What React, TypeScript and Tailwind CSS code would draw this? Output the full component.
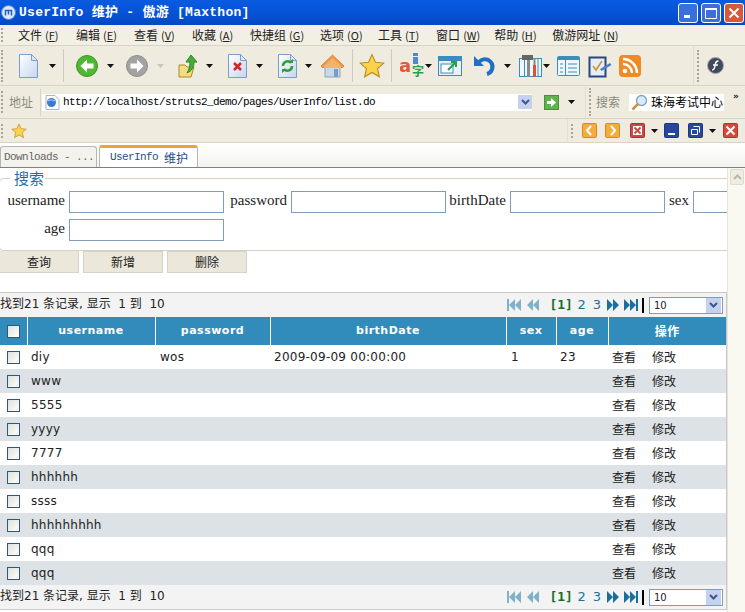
import type { ReactNode } from 'react';

const cjk = "font-['Noto_Sans_CJK_SC',sans-serif]";

function Caret({ className = '', pale = false }: { className?: string; pale?: boolean }) {
  return (
    <svg width="7" height="4" viewBox="0 0 7 4" className={`shrink-0 ${className}`}>
      <path d="M0 0h7L3.5 4z" fill={pale ? '#c8c6bc' : '#111'} />
    </svg>
  );
}

function Grip({ className = '' }: { className?: string }) {
  return <div className={`w-0 border-l-2 border-dotted border-[#a9a597] shrink-0 ${className}`} />;
}

function Divider({ className = '' }: { className?: string }) {
  return <div className={`w-px h-[33px] bg-[#cfcbbb] shrink-0 ${className}`} />;
}

function Icon({ w, h, className = '', children }: { w: number; h: number; className?: string; children: ReactNode }) {
  return (
    <svg width={w} height={h} viewBox={`0 0 ${w} ${h}`} className={`shrink-0 ${className}`}>
      {children}
    </svg>
  );
}

function Doc({ className = '', children }: { className?: string; children?: ReactNode }) {
  return (
    <Icon w={19} h={24} className={className}>
      <defs>
        <linearGradient id="docfill" x1="0" y1="0" x2="1" y2="1">
          <stop offset="0" stopColor="#ffffff" />
          <stop offset="1" stopColor="#c5d6ef" />
        </linearGradient>
      </defs>
      <path d="M.5.5h12l6 6v17H.5z" fill="url(#docfill)" stroke="#7d9ccb" />
      <path d="M12.5.5v6h6z" fill="#dfe8f6" stroke="#7d9ccb" />
      {children}
    </Icon>
  );
}

function RoundArrow({ color, dark, right = false, className = '' }: { color: string; dark: string; right?: boolean; className?: string }) {
  return (
    <Icon w={22} h={22} className={className}>
      <circle cx="11" cy="11" r="10.5" fill={color} stroke={dark} />
      <path
        d={right ? 'M11 4.5 17.5 11 11 17.5v-4H4.5v-5H11z' : 'M11 4.5 4.5 11l6.5 6.5v-4h6.5v-5H11z'}
        fill="#fff"
      />
    </Icon>
  );
}

function Star({ size, className = '' }: { size: number; className?: string }) {
  return (
    <svg width={size} height={size} viewBox="0 0 24 24" className={`shrink-0 ${className}`}>
      <path d="M12 1.5l3.2 7 7.6.8-5.7 5.1 1.7 7.6-6.8-4-6.8 4 1.7-7.6L1.2 9.3l7.6-.8z" fill="#fbd24a" stroke="#b98a1e" />
    </svg>
  );
}

function SmallBtn({ bg, border, className = '', children }: { bg: string; border: string; className?: string; children: ReactNode }) {
  return (
    <Icon w={15} h={15} className={className}>
      <rect x=".5" y=".5" width="14" height="14" rx="1" fill={bg} stroke={border} />
      {children}
    </Icon>
  );
}

function WinBtn({ red = false, children }: { red?: boolean; children: ReactNode }) {
  return (
    <div className={`w-[20px] h-[20px] rounded-[3px] border border-white flex items-center justify-center ${red ? 'bg-[#d8583a]' : 'bg-[#3b6fdc]'}`}>
      <svg width="14" height="14" viewBox="0 0 14 14">{children}</svg>
    </div>
  );
}

function PagerIcon({ kind, pale = false }: { kind: 'first' | 'prev' | 'next' | 'last'; pale?: boolean }) {
  const fill = pale ? '#7fb2c8' : '#1b6f9c';
  const paths = {
    first: 'M0 1h2v12H0zM8 1v12L2 7zM14 1v12L8 7z',
    prev: 'M7 1v12L1 7zM13 1v12L7 7z',
    next: 'M0 1v12l6-6zM6 1v12l6-6z',
    last: 'M0 1v12l6-6zM6 1v12l6-6zM12 1h2v12h-2z',
  };
  return (
    <svg width="14" height="14" viewBox="0 0 14 14" className="shrink-0">
      <path d={paths[kind]} fill={fill} />
    </svg>
  );
}

function Pager() {
  return (
    <div className="h-[24px] w-[727px] bg-[#f3f3f3] flex items-center border-[#c8c8c8] border-r">
      <span className="font-['DejaVu_Sans','Noto_Sans_CJK_SC',sans-serif] text-[12px] leading-[20px] mb-[2px] text-[#222] whitespace-pre">找到21 条记录, 显示  1 到  10</span>
      <div className="ml-auto flex items-center">
        <PagerIcon kind="first" pale />
        <div className="ml-[5px]"><PagerIcon kind="prev" pale /></div>
        <span className="ml-[9px] font-['DejaVu_Sans_Mono',monospace] font-bold text-[13px] text-[#14702a] w-[23px]">[1]</span>
        <span className="ml-[5px] font-['DejaVu_Sans',sans-serif] text-[13px] text-[#1b6f9c]">2</span>
        <span className="ml-[7px] font-['DejaVu_Sans',sans-serif] text-[13px] text-[#1b6f9c]">3</span>
        <div className="ml-[6px]"><PagerIcon kind="next" /></div>
        <div className="ml-[3px]"><PagerIcon kind="last" /></div>
        <div className="ml-[4px] w-[2px] h-[15px] bg-black" />
        <div className="ml-[5px] mr-[3px] w-[74px] h-[17px] bg-white border border-[#7f9db9] flex items-center">
          <span className="ml-[4px] font-['DejaVu_Sans',sans-serif] text-[10px] text-[#222]">10</span>
          <div className="ml-auto mr-px w-[15px] h-[15px] bg-[#c5d2ef] flex items-center justify-center">
            <svg width="9" height="6" viewBox="0 0 9 6"><path d="M1 1l3.5 3.5L8 1" fill="none" stroke="#3d5590" strokeWidth="2" /></svg>
          </div>
        </div>
      </div>
    </div>
  );
}

const menus: [string, string][] = [
  ['文件', 'F'], ['编辑', 'E'], ['查看', 'V'], ['收藏', 'A'], ['快捷组', 'G'], ['选项', 'O'], ['工具', 'T'], ['窗口', 'W'], ['帮助', 'H'], ['傲游网址', 'N'],
];

const rows: { name: string; password?: string; birth?: string; sex?: string; age?: string }[] = [
  { name: 'diy', password: 'wos', birth: '2009-09-09 00:00:00', sex: '1', age: '23' },
  { name: 'www' },
  { name: '5555' },
  { name: 'yyyy' },
  { name: '7777' },
  { name: 'hhhhhh' },
  { name: 'ssss' },
  { name: 'hhhhhhhhh' },
  { name: 'qqq' },
  { name: 'qqq' },
];

const headers: [string, string][] = [
  ['username', 'w-[128px]'],
  ['password', 'w-[115px]'],
  ['birthDate', 'w-[236px]'],
  ['sex', 'w-[50px]'],
  ['age', 'w-[52px]'],
];

const fields = ['username', 'password', 'birthDate', 'sex'];

export default function App() {
  return (
    <div className="w-[745px] h-[612px] overflow-hidden bg-white flex flex-col">
      {/* title bar */}
      <div className="h-[25px] shrink-0 bg-gradient-to-b from-[#0a5be0] via-[#0553d6] to-[#0448c4] flex items-center">
        <svg width="15" height="15" viewBox="0 0 15 15" className="ml-[1px]">
          <circle cx="7.5" cy="7.5" r="7" fill="#dce8f8" stroke="#4a83d8" />
          <path d="M4.5 10.5V5.5h6v5M7.5 5.5v4" fill="none" stroke="#1c5fc0" strokeWidth="1.5" />
        </svg>
        <span className="ml-[3px] font-['Liberation_Mono','Noto_Sans_CJK_SC',monospace] font-bold text-[13px] text-white whitespace-pre tracking-[0.27px]">UserInfo 维护 - 傲游 [Maxthon]</span>
        <div className="ml-auto mr-px flex gap-[3px]">
          <WinBtn><rect x="3" y="9" width="6" height="3" fill="#fff" /></WinBtn>
          <WinBtn><path d="M1.5 2.5h11v10h-11z" fill="none" stroke="#fff" /><rect x="1" y="2" width="12" height="2" fill="#fff" /></WinBtn>
          <WinBtn red><path d="M2.5 2.5l9 9M11.5 2.5l-9 9" stroke="#fff" strokeWidth="2" /></WinBtn>
        </div>
      </div>

      {/* menu */}
      <div className={`h-[21px] shrink-0 bg-[#f2f0e4] border-b border-[#d8d5c8] flex items-center gap-[18px] ${cjk} text-[12px] text-[#222]`}>
        <Grip className="ml-[1px] mr-[-3px] h-[14px]" />
        {menus.map(([label, key]) => (
          <span key={key} className="whitespace-pre flex items-center">
            {label}
            <span className="text-[11px] ml-[3px] w-[13px] text-center">(<span className="underline">{key}</span>)</span>
          </span>
        ))}
      </div>

      {/* toolbar */}
      <div className="h-[40px] shrink-0 bg-[#efecdf] border-b border-[#d8d5c8] flex items-center">
        <Grip className="ml-[1px] h-[32px]" />
        <Doc className="ml-[16px]" />
        <Caret className="ml-[11px]" />
        <Divider className="ml-[7px]" />
        <RoundArrow color="#4fb832" dark="#3b9426" className="ml-[12px]" />
        <Caret className="ml-[9px]" />
        <RoundArrow color="#a3a3a3" dark="#8c8c8c" right className="ml-[12px]" />
        <Caret pale className="ml-[9px]" />
        <Icon w={20} h={24} className="ml-[14px]">
          <path d="M1 11h6l2 2h7l-3 10H1z" fill="#f5dc7e" stroke="#a88a2c" />
          <path d="M13 1l6 7h-3c0 5-2 9-7 11 2-3 3-7 3-11h-4z" fill="#46ad38" stroke="#2f8a25" />
        </Icon>
        <Caret className="ml-[8px]" />
        <Doc className="ml-[15px]">
          <path d="M6 9l7 7M13 9l-7 7" stroke="#d6232a" strokeWidth="2.5" />
        </Doc>
        <Caret className="ml-[9px]" />
        <Doc className="ml-[15px]">
          <path d="M5 12a4.5 4.5 0 0 1 8-3" fill="none" stroke="#2d9d35" strokeWidth="2.5" />
          <path d="M14 12a4.5 4.5 0 0 1-8 3" fill="none" stroke="#2d9d35" strokeWidth="2.5" />
          <path d="M10 9h5V5zM9 15H4v4z" fill="#2d9d35" />
        </Doc>
        <Caret className="ml-[8px]" />
        <Icon w={23} h={24} className="ml-[9px]">
          <path d="M4 11v12h15V11z" fill="#c9d8e8" stroke="#8fa3bb" />
          <path d="M11.5 1L0 12l2 2 9.5-9 9.5 9 2-2z" fill="#f09a48" stroke="#c9732a" strokeWidth=".7" />
          <path d="M11.5 4L3 12v2h17v-2z" fill="#f4b26c" />
          <rect x="13" y="15" width="4" height="8" fill="#7b9cc4" />
        </Icon>
        <Divider className="ml-[8px]" />
        <Star size={26} className="ml-[6px]" />
        <Divider className="ml-[6px]" />
        <Icon w={25} h={26} className="ml-[8px]">
          <text x="-1" y="19" fontFamily="'DejaVu Sans', sans-serif" fontWeight="bold" fontSize="18" fill="#dd5a3a">a</text>
          <rect x="13" y="0" width="5" height="3" fill="#4f86d6" />
          <rect x="13" y="4" width="5" height="7" fill="#4f86d6" />
          <text x="12" y="23" fontFamily="'Noto Sans CJK SC', sans-serif" fontWeight="bold" fontSize="12" fill="#28a04a">字</text>
        </Icon>
        <Caret />
        <Icon w={24} h={20} className="ml-[6px]">
          <rect x=".5" y=".5" width="23" height="19" fill="#e8f1f8" stroke="#3c8dbe" />
          <rect x="1" y="1" width="22" height="4" fill="#3c8dbe" />
          <rect x="3" y="8" width="12" height="9" fill="#fff" stroke="#3c8dbe" />
          <path d="M10 14l7-7M13 6h5v5" fill="none" stroke="#24a148" strokeWidth="2" />
        </Icon>
        <Icon w={22} h={21} className="ml-[12px]">
          <path d="M4 9a7.5 7.5 0 1 1 9 10" fill="none" stroke="#1f6fc4" strokeWidth="4" />
          <path d="M0 1v10h10z" fill="#1f6fc4" />
        </Icon>
        <Caret className="ml-[8px]" />
        <Icon w={23} h={22} className="ml-[8px]">
          <rect x=".5" y="3.5" width="22" height="18" fill="#f2f7fb" stroke="#3c8dbe" />
          <path d="M5.5 4v17M19 4v17" stroke="#3c8dbe" />
          <rect x="8" y="1" width="3" height="21" fill="#8a8a8a" />
          <rect x="14" y="10" width="3" height="12" fill="#d8552e" />
          <rect x="14.5" y="3" width="2" height="7" fill="#888" />
          <rect x="3" y="0" width="11" height="5" fill="#666" />
        </Icon>
        <Caret className="ml-[1px]" />
        <Icon w={23} h={20} className="ml-[7px]">
          <rect x=".5" y=".5" width="22" height="19" rx="1" fill="#f0f6fb" stroke="#3c8dbe" />
          <rect x="1" y="1" width="21" height="3" fill="#3c8dbe" />
          <path d="M8.5 4v15M3 8h3M3 12h3M3 16h3M11 8h9M11 12h9M11 16h9" stroke="#3c8dbe" />
        </Icon>
        <Icon w={24} h={24} className="ml-[8px]">
          <rect x="1.5" y="3.5" width="16" height="19" fill="#e8eef8" stroke="#27477f" strokeWidth="2" />
          <path d="M5 12l3 4 6-9" fill="none" stroke="#c79a2b" strokeWidth="1.6" />
          <path d="M12 15l10-6 1.5 2-10 6z" fill="#4d7fc4" />
        </Icon>
        <Icon w={22} h={22} className="ml-[7px]">
          <rect width="22" height="22" rx="4" fill="#f08a24" />
          <circle cx="6" cy="16" r="2.3" fill="#fff" />
          <path d="M4 9a9 9 0 0 1 9 9M4 4a14 14 0 0 1 14 14" fill="none" stroke="#fff" strokeWidth="2.5" />
        </Icon>
        <Divider className="ml-[52px] h-[39px] bg-[#e1ded0]" />
        <Grip className="ml-[3px] h-[32px]" />
        <Icon w={17} h={17} className="ml-[8px]">
          <circle cx="8.5" cy="8.5" r="8" fill="#3f4a5c" stroke="#a4a8ae" />
          <path d="M11.5 4C8.5 4 8.5 6 8 9s-1 4-3 4M6 8h5" fill="none" stroke="#fff" strokeWidth="1.5" />
        </Icon>
      </div>

      {/* address bar */}
      <div className="h-[33px] shrink-0 bg-[#efecdf] border-b border-[#d8d5c8] flex items-center">
        <Grip className="ml-[1px] h-[22px]" />
        <span className={`ml-[6px] ${cjk} text-[12px] text-[#8a8a80] w-[24px]`}>地址</span>
        <div className="ml-[7px] w-px h-[27px] bg-[#d8d5c8]" />
        <div className="ml-px w-[490px] h-[17px] bg-white flex items-center">
          <svg width="15" height="15" viewBox="0 0 15 15" className="ml-[3px]">
            <path d="M1 .5h9l4 4v10H1z" fill="#fff" stroke="#a5b6d4" />
            <circle cx="6.5" cy="7.5" r="4.5" fill="#3c79cf" />
            <path d="M3 6c2-1.5 5-1.5 7 0" fill="none" stroke="#bfe0f8" />
          </svg>
          <span className="ml-[3px] font-['Liberation_Mono',monospace] text-[11px] text-black tracking-[-0.6px]">http://localhost/struts2_demo/pages/UserInfo/list.do</span>
          <div className="ml-auto w-[14px] h-[14px] bg-[#c5d2ef] flex items-center justify-center">
            <svg width="9" height="6" viewBox="0 0 9 6"><path d="M1 1l3.5 3.5L8 1" fill="none" stroke="#3d5590" strokeWidth="2" /></svg>
          </div>
        </div>
        <Icon w={15} h={15} className="ml-[12px]">
          <rect x=".5" y=".5" width="14" height="14" fill="#63b04e" stroke="#4a9036" />
          <path d="M3 6h4V3l5 4.5L7 12V9H3z" fill="#fff" />
        </Icon>
        <Caret className="ml-[9px]" />
        <div className="ml-[10px] w-px h-[32px] bg-[#e3e0d2]" />
        <Grip className="ml-[3px] h-[28px]" />
        <span className={`ml-[5px] ${cjk} text-[12px] text-[#8a8a80] w-[24px]`}>搜索</span>
        <div className="ml-[9px] w-[95px] h-[17px] bg-white flex items-center">
          <svg width="17" height="17" viewBox="0 0 17 17" className="ml-[2px] shrink-0">
            <circle cx="10.5" cy="6.5" r="5" fill="#dbe9f8" stroke="#7fa3c8" strokeWidth="1.3" />
            <path d="M7 10l-5.5 5.5" stroke="#c9923f" strokeWidth="2.5" />
          </svg>
          <span className={`ml-[3px] ${cjk} text-[12px] text-black whitespace-nowrap`}>珠海考试中心</span>
        </div>
        <span className="ml-[9px] self-start mt-[5px] font-['DejaVu_Sans',sans-serif] font-bold text-[9px] leading-[10px] text-[#222]">»</span>
      </div>

      {/* favourites bar */}
      <div className="h-[24px] shrink-0 bg-[#efecdf] border-b border-[#d8d5c8] flex items-center">
        <Grip className="ml-[1px] h-[14px]" />
        <Star size={16} className="ml-[8px]" />
        <div className="ml-[540px] w-px h-[23px] bg-[#e3e0d2]" />
        <Grip className="ml-[3px] h-[14px]" />
        <SmallBtn bg="#f3ad3c" border="#d68a1c" className="ml-[9px]"><path d="M9 3L5 7.5 9 12" fill="none" stroke="#fff" strokeWidth="2" /></SmallBtn>
        <SmallBtn bg="#f3ad3c" border="#d68a1c" className="ml-[8px]"><path d="M6 3l4 4.5L6 12" fill="none" stroke="#fff" strokeWidth="2" /></SmallBtn>
        <SmallBtn bg="#c84a4a" border="#a63030" className="ml-[10px]"><path d="M3 3h9v9H3z" fill="#fff" /><path d="M4.5 4.5l6 6M10.5 4.5l-6 6" stroke="#c84a4a" strokeWidth="2" /></SmallBtn>
        <Caret className="ml-[6px]" />
        <SmallBtn bg="#27479c" border="#1d3680" className="ml-[6px]"><rect x="4" y="10" width="7" height="2" fill="#fff" /></SmallBtn>
        <SmallBtn bg="#27479c" border="#1d3680" className="ml-[9px]"><path d="M5.5 3.5h6v6M3.5 6.5h6v5h-6z" fill="none" stroke="#fff" /></SmallBtn>
        <Caret className="ml-[6px]" />
        <SmallBtn bg="#d64a3e" border="#b0332a" className="ml-[7px]"><path d="M3.5 3.5l8 8M11.5 3.5l-8 8" stroke="#fff" strokeWidth="2" /></SmallBtn>
      </div>

      {/* tabs */}
      <div className="h-[24px] shrink-0 bg-gradient-to-b from-white to-[#f3f3f0] flex items-end">
        <div className="w-[97px] h-[21px] bg-[#f3f2ec] border border-b-0 border-[#b8b8b0] rounded-t-[3px] flex items-center pl-[3px] font-['Liberation_Mono',monospace] text-[11px] tracking-[-0.6px] text-[#666] whitespace-nowrap">Downloads - ...</div>
        <div className="ml-[2px] w-[99px] h-[22px] bg-white border-x border-[#b8b8b0] border-t-[3px] border-t-[#eca33a] rounded-t-[3px] flex items-center pl-[10px] text-[#1f4f8a] whitespace-pre">
          <span className="font-['Liberation_Mono',monospace] text-[11px] tracking-[-0.6px]">UserInfo</span>
          <span className={`ml-[6px] ${cjk} text-[12px]`}>维护</span>
        </div>
      </div>
      <div className="h-[1px] shrink-0 bg-[#808078]" />

      {/* page + scrollbar */}
      <div className="flex-1 min-h-0 flex">
        <div className="w-[727px] shrink-0 overflow-hidden">
          <fieldset className="w-[900px] h-[83px] border border-[#d4d2c4] rounded-[4px] -ml-px pl-[8px]">
            <legend className={`ml-[2px] pl-[4px] pr-px ${cjk} text-[15px] leading-[20px] text-[#2a6ca8]`}>搜索</legend>
            <div className="grid grid-cols-[61px_159px_63px_159px_60px_159px_24px_159px] gap-y-[6px] mt-[3px] font-['Liberation_Serif',serif] text-[15px] text-[#222]">
              {fields.map((f) => (
                <div key={f} className="contents">
                  <label className="h-[22px] flex items-center justify-end pr-[4px] pb-[3px]">{f}</label>
                  <input className="w-[155px] h-[22px] bg-white border border-[#7f9db9]" />
                </div>
              ))}
              <label className="h-[22px] flex items-center justify-end pr-[4px] pb-[3px]">age</label>
              <input className="w-[155px] h-[22px] bg-white border border-[#7f9db9]" />
            </div>
          </fieldset>

          <div className={`flex gap-[4px] ${cjk} text-[12px] text-[#222]`}>
            <button className="w-[79px] h-[22px] bg-[#ebe7da] border-r border-b border-[#d6d3c6]">查询</button>
            <button className="w-[80px] h-[22px] bg-[#ebe7da] border border-[#d6d3c6]">新增</button>
            <button className="w-[80px] h-[22px] bg-[#ebe7da] border border-[#d6d3c6]">删除</button>
          </div>

          <div className="mt-[19px] border-t border-[#c8c8c8]">
            <Pager />
          </div>

          <div className="w-[727px] border-r border-[#c8c8c8]">
            <table className="table-fixed w-[726px] border-collapse">
              <thead>
                <tr className="h-[28px] bg-[#318cbb] text-white font-['DejaVu_Sans',sans-serif] text-[11px] font-bold tracking-[0.5px]">
                  <th className="w-[27px] border-r border-white">
                    <div className="ml-[7px] w-[13px] h-[13px] bg-gradient-to-br from-[#e0e0dc] to-white border border-[#2d5a7a]" />
                  </th>
                  {headers.map(([label, width]) => (
                    <th key={label} className={`${width} border-r border-white pt-px`}>{label}</th>
                  ))}
                  <th className={`w-[118px] ${cjk} text-[12px] pb-px`}>操作</th>
                </tr>
              </thead>
              <tbody className="font-['DejaVu_Sans',sans-serif] text-[12px] text-[#222] tracking-[0.25px]">
                {rows.map((row, i) => (
                  <tr key={i} className={`h-[24px] ${i % 2 ? 'bg-[#dde2e7]' : 'bg-white'}`}>
                    <td>
                      <div className="ml-[7px] w-[13px] h-[13px] bg-gradient-to-br from-[#e0e0dc] to-white border border-[#2d5a7a]" />
                    </td>
                    <td className="pl-[4px]">{row.name}</td>
                    <td className="pl-[5px]">{row.password}</td>
                    <td className="pl-[4px]">{row.birth}</td>
                    <td className="pl-[5px]">{row.sex}</td>
                    <td className="pl-[4px]">{row.age}</td>
                    <td className={`pl-[4px] pb-px ${cjk} tracking-normal`}>
                      <span>查看</span>
                      <span className="ml-[16px]">修改</span>
                    </td>
                  </tr>
                ))}
              </tbody>
            </table>
          </div>

          <div className="border-b border-[#c8c8c8] w-[727px]">
            <Pager />
          </div>
        </div>

        {/* scrollbar */}
        <div className="w-[18px] shrink-0 bg-[#f9f8f1] border-l border-[#e6e4da] pt-[1px] pl-[2px]">
          <div className="w-[14px] h-[16px] bg-[#efece0] border border-[#dedbcd] rounded-[2px] flex items-center justify-center">
            <svg width="9" height="6" viewBox="0 0 9 6"><path d="M1 5l3.5-3.5L8 5" fill="none" stroke="#b9b7aa" strokeWidth="2" /></svg>
          </div>
        </div>
      </div>
    </div>
  );
}
